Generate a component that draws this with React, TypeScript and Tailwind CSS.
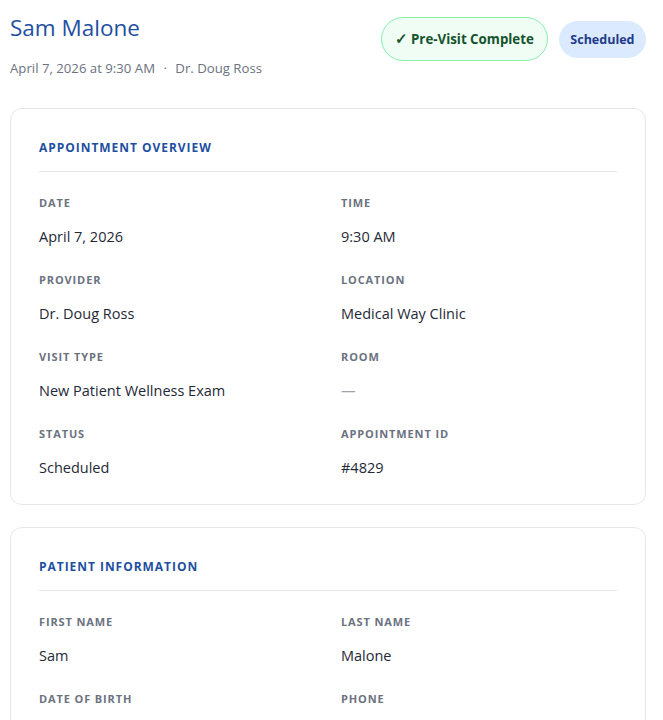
import React from 'react';

type Field = { label: string; value: string; muted?: boolean };

const overview: Field[] = [
  { label: 'Date', value: 'April 7, 2026' },
  { label: 'Time', value: '9:30 AM' },
  { label: 'Provider', value: 'Dr. Doug Ross' },
  { label: 'Location', value: 'Medical Way Clinic' },
  { label: 'Visit Type', value: 'New Patient Wellness Exam' },
  { label: 'Room', value: '—', muted: true },
  { label: 'Status', value: 'Scheduled' },
  { label: 'Appointment ID', value: '#4829' },
];

const patient: Field[] = [
  { label: 'First Name', value: 'Sam' },
  { label: 'Last Name', value: 'Malone' },
  { label: 'Date of Birth', value: 'March 14, 1985' },
  { label: 'Phone', value: '(555) 123-4567' },
];

function Section({ title, fields }: { title: string; fields: Field[] }) {
  return (
    <section className="rounded-xl border-[1.5px] border-[#e5e7eb] bg-white px-[28px] pt-[31px] pb-[25px]">
      <h2 className="border-b border-[#e5e7eb] pb-[15px] text-[12px] leading-[16px] font-bold uppercase tracking-[0.08em] text-[#1e4fa0]">
        {title}
      </h2>
      <div className="grid grid-cols-2 gap-x-[26px] gap-y-[24px] pt-[23px]">
        {fields.map((f) => (
          <div key={f.label} className="flex flex-col gap-[16px]">
            <div className="text-[11px] leading-[15px] font-bold uppercase tracking-[0.08em] text-[#6b7280]">
              {f.label}
            </div>
            <div className={`text-[14.5px] leading-[22px] ${f.muted ? 'text-[#9ca3af]' : 'text-[#1f2937]'}`}>
              {f.value}
            </div>
          </div>
        ))}
      </div>
    </section>
  );
}

export default function App() {
  return (
    <div
      className="min-h-screen bg-white pl-[10px] pr-[17px] pt-[12px] pb-8"
      style={{ fontFamily: '"Open Sans", "Noto Sans", sans-serif' }}
    >
      <header className="flex items-start justify-between">
        <div>
          <h1 className="text-[22.5px] leading-[32px] font-normal text-[#1e4fa0]">Sam Malone</h1>
          <p className="mt-[14px] text-[13.2px] leading-[20px] text-[#6b7280]">
            April 7, 2026 at 9:30 AM <span className="mx-[5px]">·</span> Dr. Doug Ross
          </p>
        </div>
        <div className="mt-[5px] flex items-center gap-[11px]">
          <span className="rounded-full border border-[#86efac] bg-[#f0fdf4] px-[13px] py-[10px] text-[13.3px] leading-[21px] font-bold text-[#14532d]">
            <span className="text-[14.5px]">✓</span> Pre-Visit Complete
          </span>
          <span className="rounded-full bg-[#dbeafe] px-[11.5px] py-[9px] text-[12.5px] leading-[19px] font-bold text-[#1e3a8a]">
            Scheduled
          </span>
        </div>
      </header>
      <div className="mt-[30px] flex flex-col gap-[22px]">
        <Section title="Appointment Overview" fields={overview} />
        <Section title="Patient Information" fields={patient} />
      </div>
    </div>
  );
}
